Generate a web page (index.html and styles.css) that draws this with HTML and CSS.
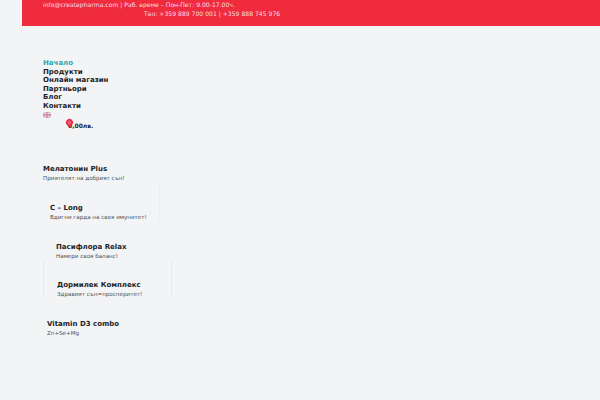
FILE: index.html

```html
<!DOCTYPE html>
<html lang="bg">
<head>
    <meta charset="UTF-8">
    <meta name="viewport" content="width=device-width, initial-scale=1.0">
    <title>Create Pharma</title>
    <link rel="stylesheet" href="styles.css">
</head>
<body>
<header class="topbar">
    <p class="topbar-mail">info@createpharma.com | Раб. време – Пон-Пет: 9.00-17.00ч.</p>
    <p class="topbar-phone">Тел: +359 889 700 001 | +359 888 745 976</p>
</header>
<nav class="menu">
    <a class="active" href="#">Начало</a>
    <a href="#">Продукти</a>
    <a href="#">Онлайн магазин</a>
    <a href="#">Партньори</a>
    <a href="#">Блог</a>
    <a href="#">Контакти</a>
    <svg class="flag" width="8" height="6" viewBox="0 0 8 6">
        <rect width="8" height="6" fill="#c9c3d6"/>
        <path d="M0 0l8 6M8 0L0 6" stroke="#e9dfe4" stroke-width="1"/>
        <path d="M4 0v6M0 3h8" stroke="#d98a9c" stroke-width="1.4"/>
    </svg>
</nav>
<div class="cart">
    <span class="cart-sum">0,00лв.</span>
    <span class="cart-count"><span>0</span></span>
</div>
<section class="slides">
    <div class="slide slide-1">
        <h3>Мелатонин Plus</h3>
        <p>Приятелят на добрият сън!</p>
    </div>
    <div class="slide slide-2">
        <h3>C – Long</h3>
        <p>Вдигни гарда на своя имунитет!</p>
    </div>
    <div class="slide slide-3">
        <h3>Пасифлора Relax</h3>
        <p>Намери своя баланс!</p>
    </div>
    <div class="slide slide-4">
        <h3>Дормилек Комплекс</h3>
        <p>Здравият сън=просперитет!</p>
    </div>
    <div class="slide slide-5">
        <h3>Vitamin D3 combo</h3>
        <p>Zn+Se+Mg</p>
    </div>
</section>
</body>
</html>
```

FILE: styles.css

```css
html, body {
    height: 100%;
}
body {
    background-color: #f2f4f6;
    color: #1d2327;
    font-family: "DejaVu Sans", sans-serif;
    margin: 0;
    padding: 0;
    overflow: hidden;
}
p, h3 {
    margin: 0;
}
.topbar {
    margin-left: 22px;
    height: 26px;
    background-color: #ef2b3d;
    color: #f9dfe2;
    font-size: 6.1px;
    line-height: 9px;
    padding-left: 21px;
    overflow: hidden;
}
.topbar-phone {
    padding-left: 101px;
}
.menu {
    margin: 33px 0 0 43px;
    font-size: 7px;
    line-height: 8.6px;
    font-weight: bold;
}
.menu a {
    display: block;
    color: #1d2327;
    text-decoration: none;
}
.menu a.active {
    color: #2aa8b0;
}
.flag {
    display: block;
    margin-top: 1px;
}
.cart {
    position: relative;
    margin: 3px 0 0 68px;
    height: 10px;
    font-size: 6px;
    line-height: 10px;
    font-weight: bold;
}
.cart-count {
    position: absolute;
    left: -2px;
    top: -2px;
    width: 7px;
    height: 7px;
    border-radius: 50% 50% 50% 0;
    background-color: #e8304a;
    transform: rotate(-45deg);
}
.cart-count span {
    display: block;
    color: #f7c9cf;
    font-size: 4px;
    font-weight: normal;
    line-height: 7px;
    text-align: center;
    transform: rotate(45deg);
}
.slides {
    margin-top: 12.5px;
}
.slide {
    height: 38.8px;
    padding-top: 22px;
    box-sizing: border-box;
}
.slide h3 {
    font-size: 7px;
    line-height: 9px;
}
.slide p {
    font-size: 5.6px;
    line-height: 8px;
    color: #4a5056;
}
.slide-1 {
    margin-left: 43px;
}
.slide-2 {
    margin-left: 43px;
    width: 117px;
    padding-left: 7px;
    border-right: 1px solid #eaecef;
}
.slide-3 {
    margin-left: 56px;
}
.slide-4 {
    margin-left: 43px;
    width: 129px;
    padding-left: 13px;
    border-left: 1px solid #e8eaed;
    border-right: 1px solid #e8eaed;
}
.slide-5 {
    margin-left: 47px;
}
```
